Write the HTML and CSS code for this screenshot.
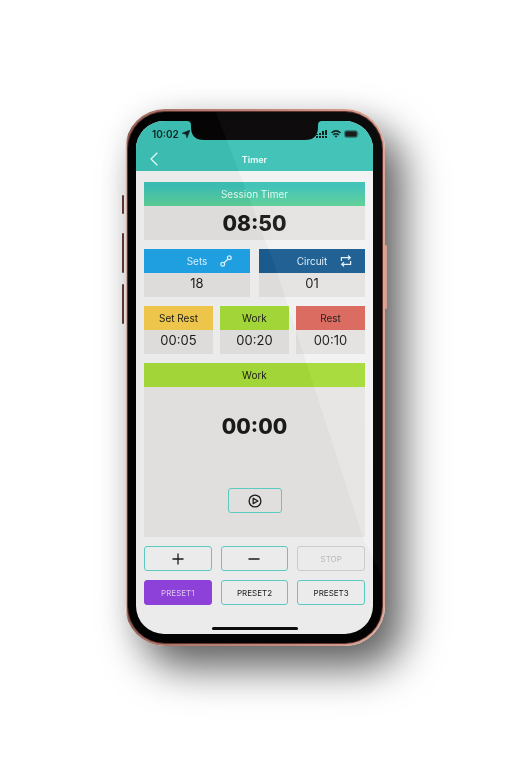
FILE: index.html
```html
<!DOCTYPE html>
<html lang="en">
<head>
<meta charset="utf-8">
<meta name="viewport" content="width=device-width, initial-scale=1">
<title>Timer</title>
<link rel="stylesheet" href="styles.css">
</head>
<body>
<main class="phone">
  <span class="key key-mute"></span>
  <span class="key key-up"></span>
  <span class="key key-down"></span>
  <span class="key key-power"></span>
  <div class="bezel">
    <div class="screen">
      <header class="top">
        <div class="status">
          <span class="clock">10:02
            <svg width="8" height="8" viewBox="0 0 8 8"><path d="M8 0 5 8 3.900 4.300 0 3.200Z" fill="#12211f" stroke="#12211f" stroke-width=".5" stroke-linejoin="round"/></svg>
          </span>
          <span class="signals">
            <svg width="12" height="8" viewBox="0 0 12 8" fill="#12211f"><path d="M0 6h2v2H0zM3 6h2v2H3zM6 6h2v2H6zM9 6h2v2H9zM0 4h2v1H0zM3 3h2v2H3zM6 1h2v4H6zM9 0h2v5H9z"/></svg>
            <svg width="10" height="8" viewBox="0 0 10 8" fill="none" stroke="#12211f" stroke-width="1.500"><path d="M.5 3Q5-1.200 9.500 3M2.200 5Q5 2.600 7.800 5"/><path d="M3.500 6 5 7.800 6.500 6Q5 5 3.500 6Z" fill="#12211f" stroke="none"/></svg>
            <svg width="16" height="8" viewBox="0 0 16 8"><rect x=".5" y=".5" width="13" height="7" rx="2" fill="none" stroke="#2d8079"/><rect x="1.200" y="1.200" width="11.600" height="5.600" rx="1" fill="#1b1d1d"/><path d="M14.500 2.500q1.500 1.500 0 3z" fill="#2d8079"/></svg>
          </span>
        </div>
        <div class="nav">
          <button class="back" aria-label="Back"><svg width="8" height="14" viewBox="0 0 8 14"><path d="M7.300.8 1 7l6.300 6.200" fill="none" stroke="#e9fbf8" stroke-width="1.200"/></svg></button>
          <h1>Timer</h1>
        </div>
      </header>
      <div class="notch">
        <svg width="135" height="20" viewBox="0 0 135 20"><path d="M0 0h135q-4 0-4 4v2q0 13-13 13H17Q4 19 4 6V4q0-4-4-4Z" fill="#060405"/></svg>
      </div>
      <div class="content">
        <section class="card">
          <h2 class="session">Session Timer</h2>
          <p class="big">08:50</p>
        </section>
        <div class="row pair">
          <section class="card">
            <h2 class="sets">Sets
              <svg class="mark" width="12" height="12" viewBox="0 0 12 12" fill="none" stroke="#d9f0fb" stroke-width="1.200"><circle cx="2.700" cy="9.300" r="1.900"/><circle cx="9.300" cy="2.700" r="1.900"/><path d="M4 8 8 4"/></svg>
            </h2>
            <p class="value">18</p>
          </section>
          <section class="card">
            <h2 class="circuit">Circuit
              <svg class="mark" width="12" height="12" viewBox="0 0 12 12" fill="none" stroke="#dfeaf3" stroke-width="1.200"><path d="M1.400 6V2.700H10M8 .5l2.300 2.200L8 4.900M10.600 6v3.300H2M4 7.100 1.700 9.300 4 11.500"/></svg>
            </h2>
            <p class="value">01</p>
          </section>
        </div>
        <div class="row trio">
          <section class="card"><h2 class="setrest">Set Rest</h2><p class="value">00:05</p></section>
          <section class="card"><h2 class="work">Work</h2><p class="value">00:20</p></section>
          <section class="card"><h2 class="rest">Rest</h2><p class="value">00:10</p></section>
        </div>
        <section class="card current">
          <h2 class="work">Work</h2>
          <div class="stage">
            <p class="count">00:00</p>
            <button class="btn play" aria-label="Play"><svg width="14" height="14" viewBox="0 0 14 14" fill="none" stroke="#1a1a1a" stroke-width="1.300" stroke-linejoin="round"><circle cx="7" cy="7" r="5.900"/><path d="M5.200 4.300v5.400L9.900 7Z"/></svg></button>
          </div>
        </section>
        <div class="row actions">
          <button class="btn" aria-label="Increase"><svg width="12" height="12" viewBox="0 0 12 12"><path d="M6 .5v11M.5 6h11" stroke="#1a1a1a" stroke-width="1.300"/></svg></button>
          <button class="btn" aria-label="Decrease"><svg width="12" height="12" viewBox="0 0 12 12"><path d="M.5 6h11" stroke="#1a1a1a" stroke-width="1.300"/></svg></button>
          <button class="btn" disabled>STOP</button>
          <button class="btn selected">PRESET1</button>
          <button class="btn">PRESET2</button>
          <button class="btn">PRESET3</button>
        </div>
      </div>
      <div class="home"></div>
    </div>
    <div class="glare"></div>
  </div>
</main>
</body>
</html>
```
FILE: styles.css
```css
* { box-sizing: border-box; }
body {
  margin: 0;
  padding: 109px 8px 100px 10px;
  background: #fff;
  color: #1a1a1a;
  font-family: Inter, "Liberation Sans", sans-serif;
}
h1, h2, p { margin: 0; }
svg { display: block; flex: none; }
button { font: inherit; color: inherit; margin: 0; }

.phone {
  position: relative;
  max-width: 260px;
  margin: 0 auto;
  padding: 3px;
  border-radius: 40px;
  background: linear-gradient(90deg, #f3ded5 0, #e6c8bc 1px, #8c5f56 3px, #a9736a 24px, #c58a7e 60%, #dba697 100%);
  box-shadow: 18px 22px 42px rgba(0, 0, 0, .62), 0 2px 30px rgba(0, 0, 0, .06);
}
.key {
  position: absolute;
  left: -3px;
  width: 2px;
  background: #5c3531;
  border-radius: 1px;
}
.key-mute { top: 86px; height: 19px; }
.key-up { top: 124px; height: 40px; }
.key-down { top: 175px; height: 40px; }
.key-power { left: auto; right: -2px; top: 136px; height: 64px; background: #d79c8e; }

.bezel {
  position: relative;
  padding: 9px 9px 9px 8px;
  border-radius: 37px;
  background: #040304;
  box-shadow: 0 0 0 1px #5d332e;
  overflow: hidden;
}
.screen {
  position: relative;
  border-radius: 28px;
  background: #ebebeb;
  overflow: hidden;
}
.glare {
  position: absolute;
  inset: 0;
  background: linear-gradient(#080808, #060606);
  mix-blend-mode: plus-lighter;
  clip-path: polygon(88px 0, 100% 0, 100% 464px, 236px 428px, 145px 148px);
  pointer-events: none;
}

.top { background: #3cbcb1; }
.status {
  display: flex;
  justify-content: space-between;
  align-items: center;
  height: 26px;
  padding: 0 13px 0 16px;
}
.clock {
  display: flex;
  align-items: center;
  gap: 3px;
  font-size: 10px;
  font-weight: 600;
  color: #12211f;
}
.signals { display: flex; gap: 3px; position: relative; z-index: 1; }
.nav {
  display: grid;
  grid-template-columns: 20px 1fr 20px;
  align-items: center;
  height: 24px;
  padding: 0 8px;
}
.back {
  padding: 0 6px;
  border: 0;
  background: none;
}
h1 {
  font-size: 9px;
  font-weight: 600;
  text-align: center;
  color: #e4f7f4;
}
.notch {
  position: absolute;
  top: 0;
  left: 0;
  right: 0;
  display: flex;
  justify-content: center;
}

.content {
  display: flex;
  flex-direction: column;
  gap: 9px;
  padding: 11px 8px 0;
}
.row { display: grid; }
.pair { grid-template-columns: 1fr 1fr; gap: 9px; }
.trio { grid-template-columns: repeat(3, 1fr); gap: 7px; }
.actions { grid-template-columns: repeat(3, 1fr); gap: 9px; }
.card { background: #dddcda; }
h2 {
  position: relative;
  height: 24px;
  font-size: 10px;
  line-height: 24px;
  font-weight: 400;
  text-align: center;
}
.mark { position: absolute; right: 18px; top: 6px; }
.session { background: linear-gradient(#3cbcb1 20%, #5bc991); color: #d9f5ea; }
.sets { background: #1f9fe0; color: #d3edfa; }
.circuit { background: #1a5a8c; color: #d9e6f0; }
.circuit .mark { right: 13px; }
.setrest { background: #ecc54a; }
.work { background: #a2d638; }
.rest { background: #d4655b; }
.big, .count {
  font-size: 21px;
  font-weight: 800;
  line-height: 32px;
  text-align: center;
}
.big { padding-top: 2px; }
.value {
  height: 24px;
  font-size: 13px;
  line-height: 20px;
  text-align: center;
}
.current { background: #e0dfdd; }
.stage {
  display: flex;
  flex-direction: column;
  align-items: center;
  gap: 45px;
  padding: 24px 0;
}
.btn {
  display: flex;
  align-items: center;
  justify-content: center;
  height: 25px;
  padding: 0;
  border: 1px solid #5ccabf;
  border-radius: 3px;
  background: none;
  font-size: 8px;
}
.play { width: 54px; }
.btn:disabled { border-color: #cbcbcb; color: #b9b9b9; }
.selected { background: #8e41d8; border-color: #8e41d8; color: #dfc5f5; }
.home {
  width: 86px;
  height: 3px;
  margin: 22px auto 4px;
  border-radius: 2px;
  background: #0c0c0c;
}
```
